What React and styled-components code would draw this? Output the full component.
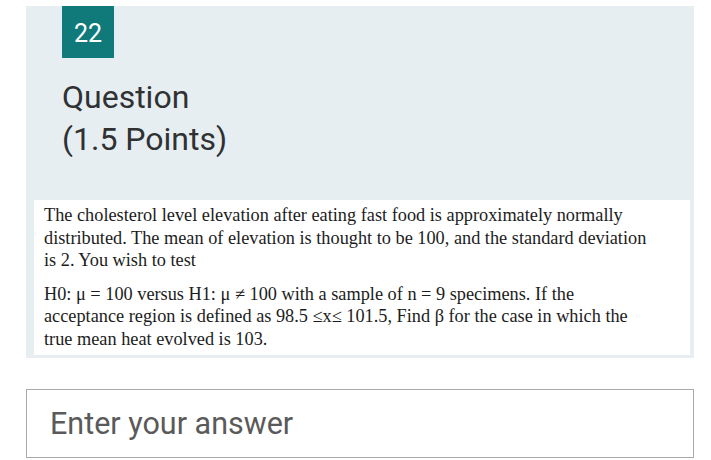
import React from "react";
import styled, { createGlobalStyle } from "styled-components";

const GlobalStyle = createGlobalStyle`
  html, body {
    margin: 0;
    padding: 0;
    background: #ffffff;
  }
  body {
    font-family: Roboto, "Liberation Sans", sans-serif;
  }
`;

const Page = styled.div`
  width: 711px;
  height: 460px;
  box-sizing: border-box;
  padding: 6px 17px 0 26px;
  display: flex;
  flex-direction: column;
`;

const Card = styled.section`
  background: #e7eef2;
  display: flex;
  flex-direction: column;
  padding: 0 4px 3px 8px;
`;

const Header = styled.div`
  padding-left: 28px;
  display: flex;
  flex-direction: column;
  align-items: flex-start;
`;

const Badge = styled.div`
  width: 52px;
  height: 52px;
  background: #0f7a79;
  color: #ffffff;
  font-size: 25px;
  display: flex;
  align-items: center;
  justify-content: center;
  padding-top: 2px;
  box-sizing: border-box;
`;

const Title = styled.h2`
  margin: 18px 0 0;
  font-weight: 400;
  font-size: 32px;
  line-height: 42px;
  color: #2f3133;
`;

const Prompt = styled.div`
  margin-top: 40px;
  background: #ffffff;
  padding: 4px 8px 5px 10px;
  font-family: "Liberation Serif", "Times New Roman", serif;
  font-size: 18.3px;
  line-height: 22.5px;
  color: #1c1c1c;
  white-space: nowrap;
`;

const Para = styled.p`
  margin: 0;
  & + & {
    margin-top: 11px;
  }
`;

const AnswerBox = styled.div`
  margin-top: 31px;
  height: 69px;
  box-sizing: border-box;
  border: 1px solid #aaaaaa;
  background: #ffffff;
  display: flex;
  align-items: center;
  padding-left: 23px;
  font-size: 30.5px;
  color: #5a5a5a;
`;

export default function App() {
  return (
    <>
      <GlobalStyle />
      <Page>
        <Card>
          <Header>
            <Badge>22</Badge>
            <Title>
              Question
              <br />
              (1.5 Points)
            </Title>
          </Header>
          <Prompt>
            <Para>
              The cholesterol level elevation after eating fast food is
              approximately normally
              <br />
              distributed. The mean of elevation is thought to be 100, and the
              standard deviation
              <br />
              is 2. You wish to test
            </Para>
            <Para>
              H0: μ = 100 versus H1: μ ≠ 100 with a sample of n = 9 specimens.
              If the
              <br />
              acceptance region is defined as 98.5 ≤x≤ 101.5, Find β for the
              case in which the
              <br />
              true mean heat evolved is 103.
            </Para>
          </Prompt>
        </Card>
        <AnswerBox>Enter your answer</AnswerBox>
      </Page>
    </>
  );
}
